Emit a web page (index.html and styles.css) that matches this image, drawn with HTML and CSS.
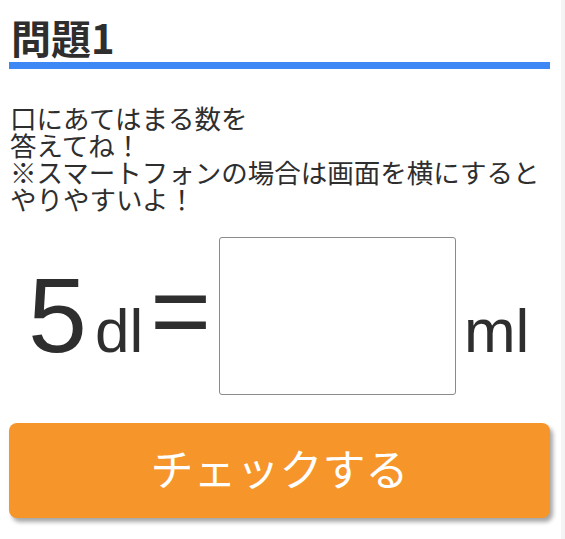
FILE: index.html
```html
<!DOCTYPE html>
<html lang="ja">
<head>
<meta charset="utf-8">
<title>問題1</title>
<link rel="stylesheet" href="styles.css">
</head>
<body>
<div class="page">
  <main class="main">
    <h2 class="title">問題1</h2>
    <p class="lead">口にあてはまる数を<br>答えてね！<br>※スマートフォンの場合は画面を横にすると<br>やりやすいよ！</p>
    <div class="equation">
      <span class="num">5</span>
      <span class="unit unit-dl">dl</span>
      <span class="eq">=</span>
      <input class="answer" type="text" aria-label="答え">
      <span class="unit unit-ml">ml</span>
    </div>
    <button class="check" type="button">チェックする</button>
  </main>
  <div class="rail"></div>
</div>
</body>
</html>
```

FILE: styles.css
```css
html, body {
  margin: 0;
  padding: 0;
  background: #ffffff;
}

body {
  font-family: "Noto Sans CJK JP", "Noto Sans", sans-serif;
  color: #333333;
}

.page {
  display: flex;
  min-height: 100vh;
}

.main {
  flex: 1;
  padding: 0 11px 0 9px;
  display: flex;
  flex-direction: column;
}

.rail {
  width: 4px;
  background: #f4f4f4;
}

.title {
  margin: 16px 0 0 0;
  padding: 0 0 3px 2px;
  font-size: 40px;
  line-height: 43px;
  font-weight: 700;
  color: #2e2e2e;
  border-bottom: 7px solid #3d88f4;
}

.lead {
  margin: 35px 0 0 1px;
  font-size: 26.5px;
  line-height: 27px;
  color: #2e2e2e;
}

.equation {
  display: flex;
  align-items: flex-start;
  margin-top: 24px;
  padding-left: 19px;
  font-family: "Liberation Sans", Arial, sans-serif;
  color: #2e2e2e;
}

.num {
  font-size: 106px;
  line-height: 1;
  margin-top: 26px;
}

.unit {
  font-size: 62px;
  line-height: 1;
  margin-top: 64px;
}

.unit-dl {
  margin-left: 8px;
}

.unit-ml {
  margin-left: 8px;
}

.eq {
  font-size: 104px;
  line-height: 1;
  margin-top: 22px;
  margin-left: 7px;
}

.answer {
  box-sizing: border-box;
  width: 237px;
  height: 158px;
  margin: 1px 0 0 8px;
  padding: 0;
  border: 1px solid #8a8a8a;
  border-radius: 3px;
  background: #ffffff;
  font-size: 60px;
  text-align: center;
  font-family: "Liberation Sans", Arial, sans-serif;
}

.check {
  margin-top: 28px;
  height: 95px;
  width: 100%;
  border: none;
  border-radius: 8px;
  background: #f6952a;
  color: #ffffff;
  font-family: "Noto Sans CJK JP", "Noto Sans", sans-serif;
  font-size: 43px;
  line-height: 1;
  padding: 0 0 6px 0;
  box-shadow: 3px 4px 4px rgba(0, 0, 0, 0.35);
  cursor: pointer;
}
```
